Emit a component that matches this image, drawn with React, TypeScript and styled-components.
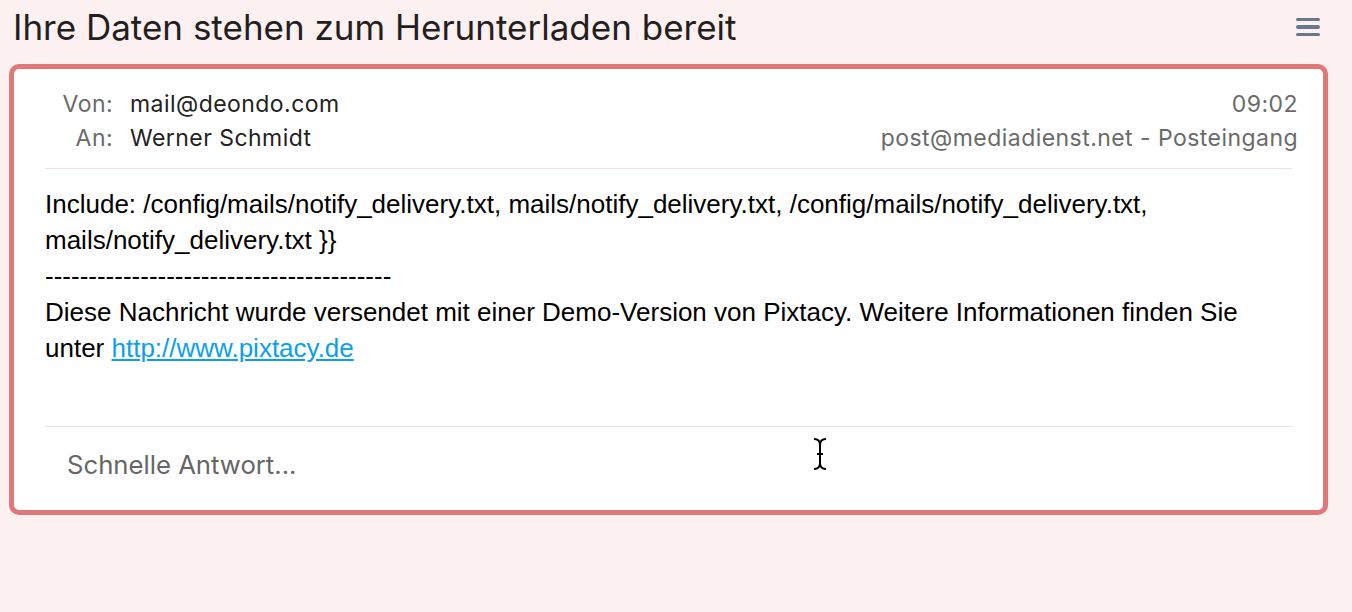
import React from "react"
import styled, { createGlobalStyle } from "styled-components"

const GlobalStyle = createGlobalStyle`
  html, body {
    margin: 0;
    padding: 0;
    background: #fdf0f0;
  }
  body {
    font-family: Inter, "Noto Sans", sans-serif;
  }
`

const Page = styled.div`
  width: 1352px;
  height: 612px;
  background: #fdf0f0;
`

const TitleBar = styled.div`
  display: flex;
  align-items: center;
  justify-content: space-between;
  height: 54px;
  padding: 0 32px 0 13px;
  margin-bottom: 10px;
`

const Title = styled.h1`
  margin: 0;
  font-size: 35px;
  font-weight: 400;
  color: #231f20;
`

const MenuButton = styled.button`
  display: flex;
  flex-direction: column;
  gap: 4px;
  padding: 0;
  border: none;
  background: none;
  span {
    display: block;
    width: 24px;
    height: 3.5px;
    border-radius: 2px;
    background: #66788a;
  }
`

const Card = styled.div`
  width: 1319px;
  height: 451px;
  box-sizing: border-box;
  margin-left: 9px;
  border: 5px solid #e07878;
  border-radius: 10px;
  background: #fff;
`

const Inner = styled.div`
  margin: 0 31px;
`

const Header = styled.div`
  display: flex;
  justify-content: space-between;
  padding: 18px 0 13px;
  border-bottom: 1px solid #f3dfdf;
  font-size: 23px;
  line-height: 34px;
  letter-spacing: 0.45px;
`

const Fields = styled.div`
  display: grid;
  grid-template-columns: 68px auto;
  column-gap: 17px;
`

const Label = styled.div`
  text-align: right;
  color: #6a6a6a;
`

const Value = styled.div`
  color: #222;
`

const Meta = styled.div`
  text-align: right;
  color: #6a6a6a;
  margin-right: -6px;
`

const Body = styled.div`
  padding: 17px 0 60px;
  border-bottom: 1px solid #f3dfdf;
  font-family: "Liberation Sans", Arial, sans-serif;
  font-size: 26px;
  line-height: 36px;
  color: #000;
  a {
    color: #0aa0ee;
  }
`

const Reply = styled.div`
  position: relative;
  padding: 23px 22px 30px;
  font-size: 25.7px;
  line-height: 30px;
  color: #666;
`

const Cursor = styled.svg`
  position: absolute;
  left: 767px;
  top: 10px;
`

export default function App() {
  return (
    <>
      <GlobalStyle />
      <Page>
        <TitleBar>
          <Title>Ihre Daten stehen zum Herunterladen bereit</Title>
          <MenuButton aria-label="Menü">
            <span />
            <span />
            <span />
          </MenuButton>
        </TitleBar>
        <Card>
          <Inner>
            <Header>
              <Fields>
                <Label>Von:</Label>
                <Value>mail@deondo.com</Value>
                <Label>An:</Label>
                <Value>Werner Schmidt</Value>
              </Fields>
              <Meta>
                <div>09:02</div>
                <div>post@mediadienst.net - Posteingang</div>
              </Meta>
            </Header>
            <Body>
              Include: /config/mails/notify_delivery.txt, mails/notify_delivery.txt, /config/mails/notify_delivery.txt,
              <br />
              mails/notify_delivery.txt {"}}"}
              <br />
              ----------------------------------------
              <br />
              Diese Nachricht wurde versendet mit einer Demo-Version von Pixtacy. Weitere Informationen finden Sie
              <br />
              unter <a href="http://www.pixtacy.de">http://www.pixtacy.de</a>
            </Body>
            <Reply>
              Schnelle Antwort...
              <Cursor width="16" height="34" viewBox="0 0 16 34">
                <path
                  d="M2 2 Q8 2 8 8 Q8 2 14 2 M8 8 V26 M5 17 H11 M2 32 Q8 32 8 26 Q8 32 14 32"
                  fill="none"
                  stroke="#000"
                  strokeWidth="2"
                />
              </Cursor>
            </Reply>
          </Inner>
        </Card>
      </Page>
    </>
  )
}
